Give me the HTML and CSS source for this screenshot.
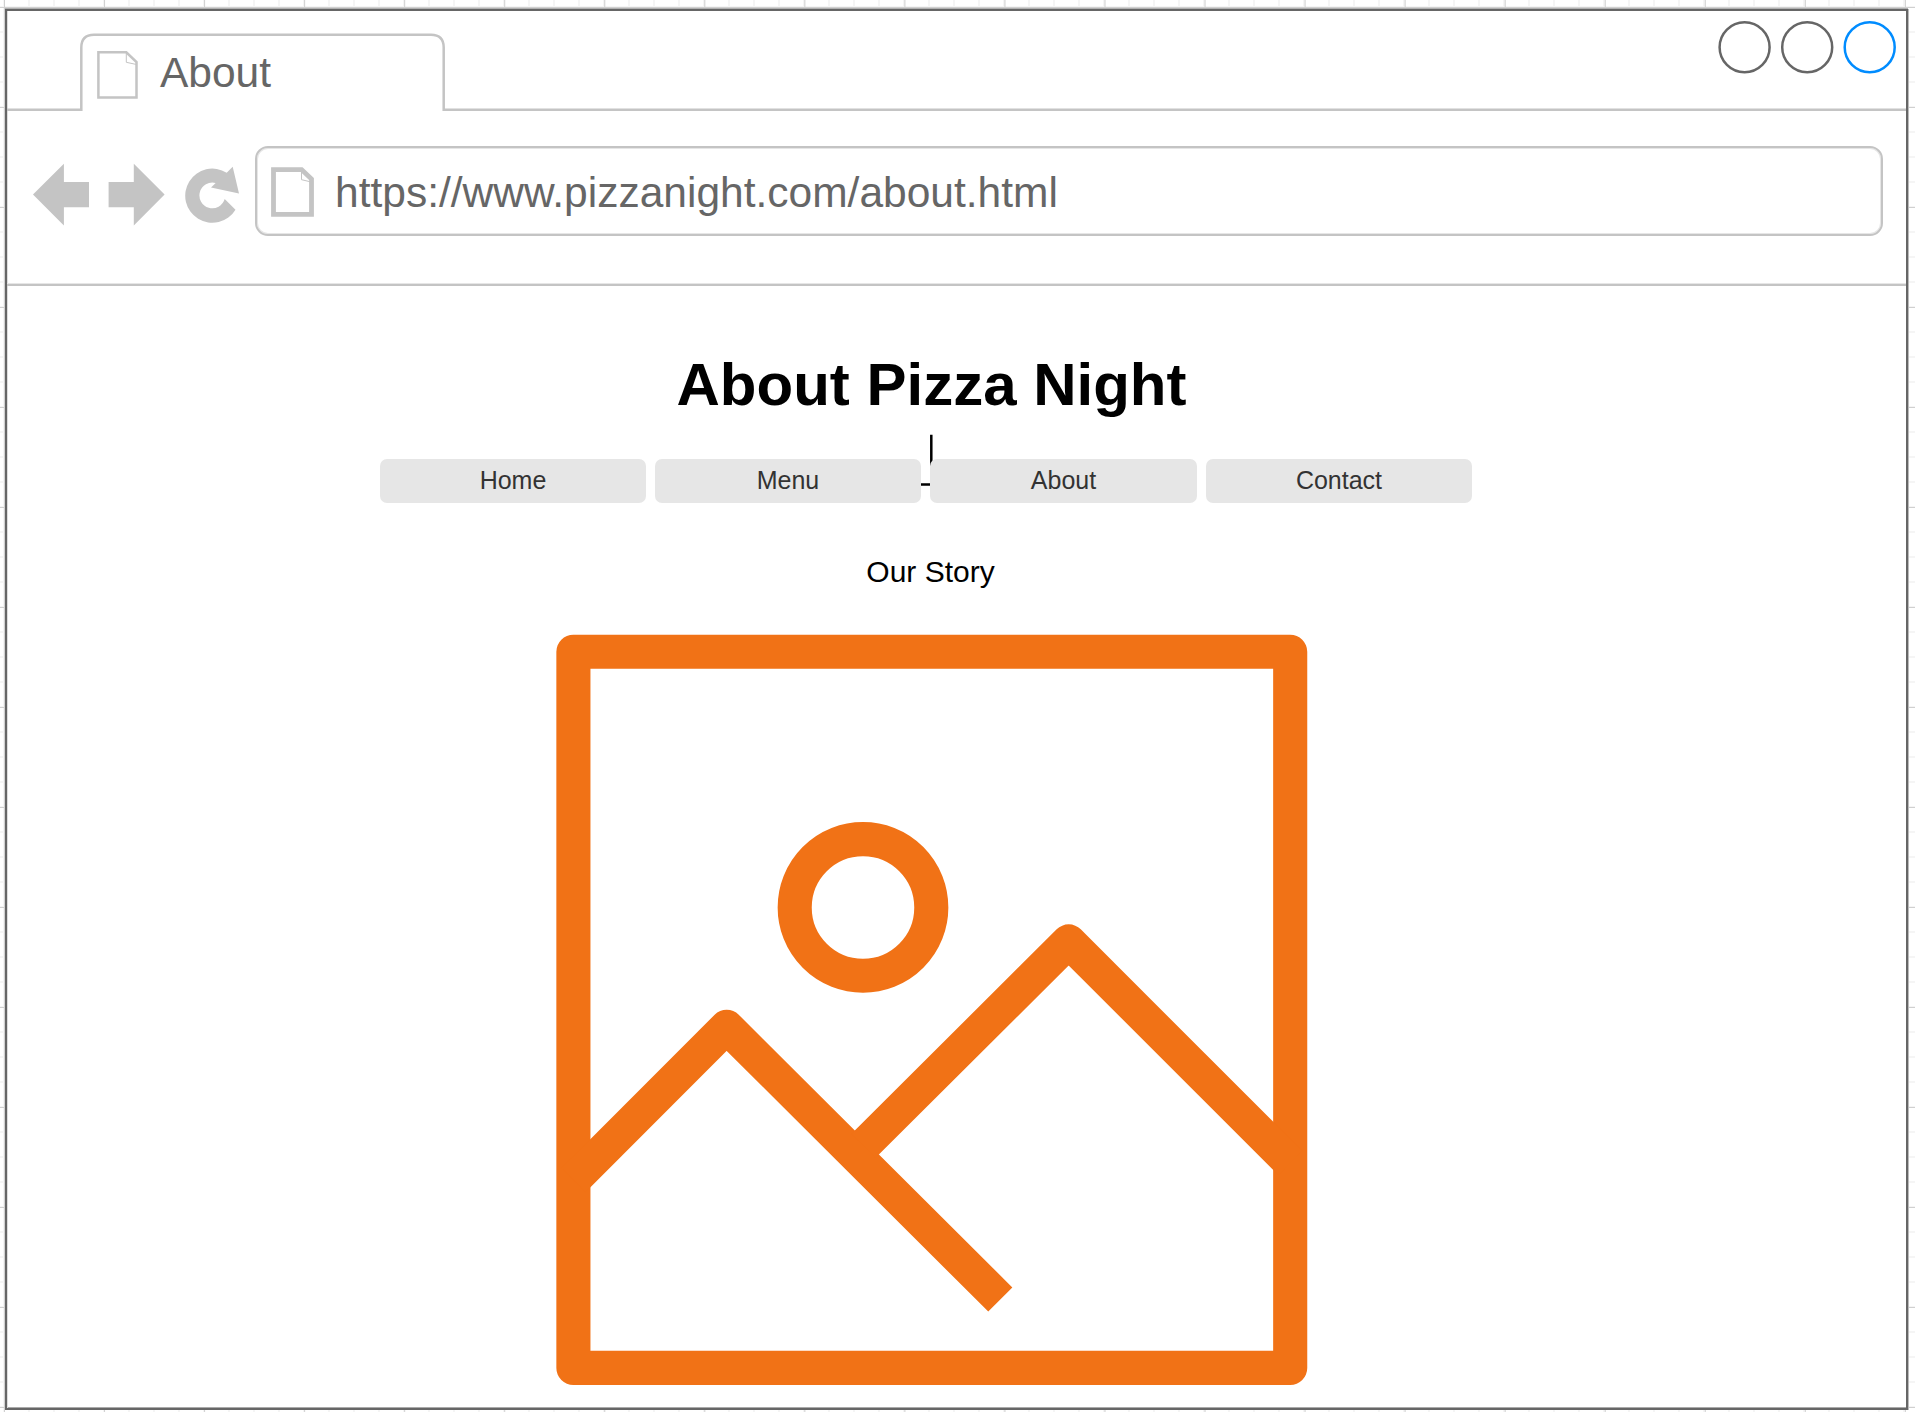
FILE: index.html
```html
<!DOCTYPE html>
<html lang="en">
<head>
<meta charset="utf-8">
<title>About</title>
<link rel="stylesheet" href="styles.css">
</head>
<body>
<div class="window">
  <header class="tabstrip">
    <svg class="tab-outline" viewBox="7 11 1899 100" aria-hidden="true">
      <path d="M7 109.7H81.3V47.5Q81.3 34.7 94 34.7H431Q443.7 34.7 443.7 47.5V109.7H1906" fill="none" stroke="#c4c4c4" stroke-width="2.5"/>
    </svg>
    <div class="tab">
      <svg class="tab-icon" viewBox="97 51 41 48" aria-hidden="true">
        <path d="M98.4 52.3H126.3L136.5 62V97.4H98.4Z" fill="#fff" stroke="#c4c4c4" stroke-width="2.5"/>
        <path d="M126.3 52.5V62.3L136.5 64.5" fill="none" stroke="#c4c4c4"/>
      </svg>
      <span class="tab-title">About</span>
    </div>
    <svg class="controls" viewBox="1718 20 180 54" aria-hidden="true">
      <g fill="none" stroke-width="2.5">
        <circle cx="1744.6" cy="47.3" r="25" stroke="#666"/>
        <circle cx="1807.2" cy="47.3" r="25" stroke="#666"/>
        <circle cx="1869.7" cy="47.3" r="25" stroke="#008cff"/>
      </g>
    </svg>
  </header>

  <div class="toolbar">
    <svg class="nav-icons" viewBox="33 160 212 70" aria-hidden="true">
      <g fill="#c4c4c4">
        <path d="M33 194.6L63.9 163.7V182H89V207.2H63.9V225.6Z"/>
        <path d="M164.6 194.6L133.8 163.7V182H108.6V207.2H133.8V225.6Z"/>
        <path d="M235.5 209.7A27.1 27.1 0 1 1 226.7 172.7L232.7 166.7L239 193.5L211 187.5L215.7 182.9A12.9 12.9 0 1 0 224.7 199L235.5 209.7Z"/>
      </g>
    </svg>
    <div class="address">
      <svg class="address-icon" viewBox="271 167 43 50" aria-hidden="true">
        <path d="M273.5 169.6H301.6L311.5 179V214.4H273.5Z" fill="#fff" stroke="#c4c4c4" stroke-width="4.8"/>
        <path d="M301.5 171V179.7L310 181.7" fill="none" stroke="#c4c4c4"/>
      </svg>
      <span class="url">https://www.pizzanight.com/about.html</span>
    </div>
  </div>

  <main class="page">
    <h1 class="heading">About Pizza Night</h1>
    <nav class="menu">
      <svg class="connector" viewBox="920 434 14 56" aria-hidden="true">
        <path d="M931.3 434.7V484.4H920" fill="none" stroke="#000" stroke-width="2.5"/>
      </svg>
      <a class="menu-item">Home</a>
      <a class="menu-item">Menu</a>
      <a class="menu-item">About</a>
      <a class="menu-item">Contact</a>
    </nav>
    <p class="subtitle">Our Story</p>
    <svg class="picture" viewBox="556 634 752 752" role="img" aria-label="Image placeholder">
      <g fill="none" stroke="#f17216" stroke-width="34.1" stroke-linejoin="round">
        <rect x="573.4" y="651.7" width="716.8" height="716.2"/>
        <circle cx="863" cy="907.4" r="68.3"/>
        <path d="M573.4 1180.3L726.7 1026.8L1000.3 1299.5"/>
        <path d="M863.3 1146L1068.7 941.4L1290.2 1162.9"/>
      </g>
    </svg>
  </main>
</div>
</body>
</html>
```
FILE: styles.css
```css
* {
  box-sizing: border-box;
}

body {
  margin: 0;
  height: 1412px;
  overflow: hidden;
  display: flex;
  padding: 9px 7px 2px 5px;
  font-family: "Liberation Sans", Arial, sans-serif;
  background-color: #fff;
  background-image:
    linear-gradient(to right, #d0d0d0 1px, transparent 1px),
    linear-gradient(to bottom, #d0d0d0 1px, transparent 1px),
    linear-gradient(to right, #f5f5f5 2px, transparent 2px),
    linear-gradient(to bottom, #f5f5f5 2px, transparent 2px);
  background-size: 100.05px 100px, 100px 100px, 25px 25px, 25px 25px;
  background-position: 4px 0, 0 7px, 3px 0, 0 6px;
}

.window {
  width: 1903px;
  height: 1401px;
  background: #fff;
  border: 2px solid #666;
  box-shadow: 1px 0 #bbb, 0 -1px #b0b0b0, inset 1px 0 #ddd, inset 0 -1px #aaa;
}

.tabstrip {
  position: relative;
  display: flex;
  justify-content: space-between;
  height: 100px;
  padding: 9px 8px 0 90px;
}

.tab-outline {
  position: absolute;
  left: 0;
  top: 0;
  width: 1899px;
  height: 100px;
}

.tab {
  display: flex;
  gap: 22px;
  padding-top: 28px;
}

.tab-icon {
  width: 41px;
  height: 48px;
  margin-top: 3px;
}

.tab-title,
.url {
  margin-top: 1px;
  font-size: 42.5px;
  line-height: 48px;
  color: #666;
}

.controls {
  width: 180px;
  height: 54px;
}

.toolbar {
  display: flex;
  height: 175px;
  padding: 35px 23px 0 26px;
  border-bottom: 2px solid #c4c4c4;
  box-shadow: inset 0 -1px #e6e6e6;
}

.nav-icons {
  width: 212px;
  height: 70px;
  margin-top: 14px;
  flex: none;
}

.address {
  flex: 1;
  display: flex;
  gap: 21px;
  height: 90px;
  margin-left: 10px;
  padding: 19px 14px;
  border: 2px solid #c4c4c4;
  border-radius: 13px;
  box-shadow: inset 0 0 0 1px #e6e6e6;
}

.address-icon {
  width: 43px;
  height: 50px;
}

.url {
  margin-top: 2px;
}

.page {
  display: flex;
  flex-direction: column;
  align-items: center;
  width: 1850px;
  padding-top: 65px;
}

.heading {
  margin: 0 1px 0 0;
  font-size: 60px;
  line-height: 68px;
  color: #000;
}

.menu {
  position: relative;
  display: grid;
  grid-template-columns: 266px 266px 267px 266px;
  gap: 9px;
  width: 1092px;
  margin: 40px 12px 0 0;
}

.connector {
  position: absolute;
  left: 540px;
  top: -25px;
  width: 14px;
  height: 56px;
}

.menu-item {
  position: relative;
  height: 44px;
  border-radius: 7px;
  background: #e6e6e6;
  color: #333;
  font-size: 25px;
  line-height: 42px;
  text-align: center;
}

.subtitle {
  margin: 52px 3px 0 0;
  font-size: 30px;
  line-height: 34px;
  color: #000;
}

.picture {
  width: 752px;
  height: 752px;
  margin-top: 45px;
}
```
